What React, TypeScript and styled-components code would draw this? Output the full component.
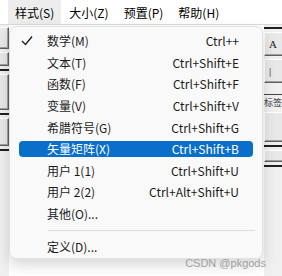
import styled, {createGlobalStyle} from "styled-components";

const GlobalStyle = createGlobalStyle`
  html, body {
    margin: 0;
    padding: 0;
    background: #ffffff;
  }
  body {
    font-family: "Noto Sans CJK SC", "Noto Sans", sans-serif;
  }
`;

const Window = styled.div`
    position: relative;
    width: 282px;
    height: 276px;
    overflow: hidden;
    background: #ffffff;
    display: flex;
    flex-direction: column;
`;

const MenuBar = styled.div`
    height: 24px;
    display: flex;
    align-items: stretch;
    padding-left: 8px;
    gap: 1px;
    background: #ffffff;
    border-bottom: 1px solid #d9d9d9;
`;

const MenuBarItem = styled.div<{ $active?: boolean }>`
    display: flex;
    align-items: center;
    padding: 0 7px;
    font-size: 12px;
    color: #000;
    background: ${p => p.$active ? "#ededed" : "transparent"};
`;

const Workspace = styled.div`
    flex: 1;
    display: flex;
    justify-content: space-between;
    background: #ffffff;
`;

const SideStrip = styled.div<{ $side: "left" | "right" }>`
    width: ${p => p.$side === "left" ? "9px" : "18px"};
    background: #f0f0f0;
    display: flex;
    flex-direction: column;
    align-items: ${p => p.$side === "left" ? "flex-end" : "flex-start"};
    overflow: hidden;
    padding-top: 2px;
    gap: 3px;
`;

const ToolButton = styled.div<{ $h: number }>`
    width: 22px;
    height: ${p => p.$h}px;
    flex-shrink: 0;
    box-sizing: border-box;
    border: 1px solid #606060;
    border-top-color: #fff;
    border-left-color: #fff;
    box-shadow: inset -1px -1px 0 #a0a0a0;
    background: #e8e8e8;
    font-family: "Liberation Serif", serif;
    font-size: 11px;
    display: flex;
    align-items: center;
    padding-left: 4px;
    color: #222;
`;

const RuleLine = styled.div`
    width: 30px;
    height: 2px;
    flex-shrink: 0;
    background: #202020;
`;

const TabLabel = styled.div`
    font-size: 9px;
    color: #333;
    white-space: nowrap;
    border-top: 1px solid #444;
    margin-top: 8px;
    padding-top: 1px;
`;

const Popup = styled.div`
    position: absolute;
    left: 9px;
    top: 26px;
    width: 254px;
    box-sizing: border-box;
    background: #f9f9f9;
    border: 1px solid #e2e2e2;
    border-radius: 7px;
    box-shadow: 0 6px 14px rgba(0, 0, 0, 0.16);
    display: flex;
    flex-direction: column;
    padding: 3px 0 1px;
`;

const Item = styled.div<{ $selected?: boolean }>`
    position: relative;
    height: 15.6px;
    margin: 3px 9px;
    padding: 0 14px 0 28px;
    display: flex;
    align-items: center;
    justify-content: space-between;
    border-radius: 4px;
    font-size: 12px;
    white-space: nowrap;
    color: ${p => p.$selected ? "#ffffff" : "#1b1b1b"};
    background: ${p => p.$selected ? "#0a6fc9" : "transparent"};
`;

const Check = styled.svg`
    position: absolute;
    left: 2px;
    top: 2px;
`;

const Shortcut = styled.span`
    text-align: right;
`;

const Separator = styled.div`
    height: 1px;
    background: #dcdcdc;
    margin: 6px 7px 4px 38px;
`;

const Watermark = styled.div`
    position: absolute;
    right: 16px;
    bottom: 7px;
    font-family: "Liberation Sans", Arial, sans-serif;
    font-size: 11px;
    color: #a0a0a0;
`;

type Entry = { label: string, shortcut?: string, checked?: boolean, selected?: boolean }

const entries: Entry[] = [
    {label: "数学(M)", shortcut: "Ctrl++", checked: true},
    {label: "文本(T)", shortcut: "Ctrl+Shift+E"},
    {label: "函数(F)", shortcut: "Ctrl+Shift+F"},
    {label: "变量(V)", shortcut: "Ctrl+Shift+V"},
    {label: "希腊符号(G)", shortcut: "Ctrl+Shift+G"},
    {label: "矢量矩阵(X)", shortcut: "Ctrl+Shift+B", selected: true},
    {label: "用户 1(1)", shortcut: "Ctrl+Shift+U"},
    {label: "用户 2(2)", shortcut: "Ctrl+Alt+Shift+U"},
    {label: "其他(O)..."},
];

export default function App() {
    return (
        <>
            <GlobalStyle/>
            <Window>
                <MenuBar>
                    <MenuBarItem $active>样式(S)</MenuBarItem>
                    <MenuBarItem>大小(Z)</MenuBarItem>
                    <MenuBarItem>预置(P)</MenuBarItem>
                    <MenuBarItem>帮助(H)</MenuBarItem>
                </MenuBar>

                <Workspace>
                    <SideStrip $side="left">
                        <ToolButton $h={22}/>
                        <ToolButton $h={14}/>
                        <RuleLine/>
                        <ToolButton $h={36}/>
                        <RuleLine/>
                        <ToolButton $h={28}/>
                        <RuleLine/>
                    </SideStrip>
                    <SideStrip $side="right">
                        <RuleLine/>
                        <ToolButton $h={24}>A</ToolButton>
                        <ToolButton $h={24}>|</ToolButton>
                        <TabLabel>标签</TabLabel>
                        <ToolButton $h={30}/>
                        <RuleLine/>
                        <ToolButton $h={12}/>
                        <RuleLine/>
                    </SideStrip>
                </Workspace>

                <Popup>
                    {entries.map(entry =>
                        <Item key={entry.label} $selected={entry.selected}>
                            {entry.checked &&
                                <Check width="12" height="11" viewBox="0 0 12 11">
                                    <polyline points="1,6 4.5,9.5 11,1.5" fill="none" stroke="#1b1b1b" strokeWidth="1.3"/>
                                </Check>}
                            <span>{entry.label}</span>
                            {entry.shortcut && <Shortcut>{entry.shortcut}</Shortcut>}
                        </Item>
                    )}
                    <Separator/>
                    <Item>
                        <span>定义(D)...</span>
                    </Item>
                </Popup>

                <Watermark>CSDN @pkgods</Watermark>
            </Window>
        </>
    );
}
